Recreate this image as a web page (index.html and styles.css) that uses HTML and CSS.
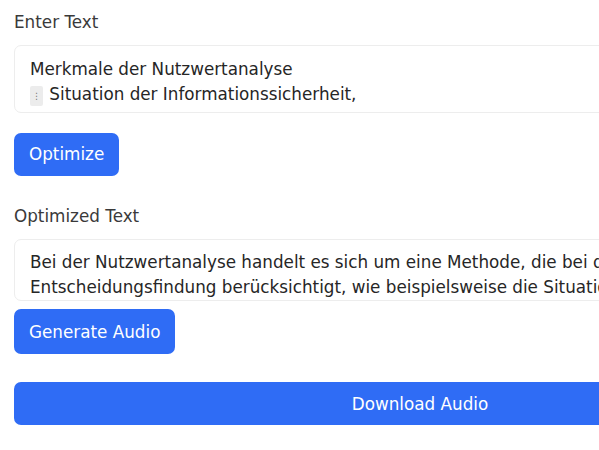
FILE: index.html
```html
<!DOCTYPE html>
<html lang="de">
<head>
<meta charset="utf-8">
<title>Text Optimizer</title>
<link rel="stylesheet" href="styles.css">
</head>
<body>
<main class="app">
  <section class="block">
    <label class="field-label">Enter Text</label>
    <div class="textbox textbox-input" role="textbox" aria-multiline="true">
      <div class="line">Merkmale der Nutzwertanalyse</div>
      <div class="line"><span class="tofu">&#8942;</span> Situation der Informationssicherheit,</div>
      <div class="line line-next"><span class="tofu">&#8942;</span> Kosten und Aufwand der Maßnahmen,</div>
    </div>
    <button class="btn btn-optimize">Optimize</button>
  </section>
  <section class="block block-second">
    <label class="field-label">Optimized Text</label>
    <div class="textbox textbox-output" role="textbox" aria-multiline="true">
      <div class="line">Bei der Nutzwertanalyse handelt es sich um eine Methode, die bei der Bewertung von Alternativen mehrere Kriterien in die</div>
      <div class="line">Entscheidungsfindung berücksichtigt, wie beispielsweise die Situation der Informationssicherheit, die Kosten und den Aufwand.</div>
    </div>
    <button class="btn btn-generate">Generate Audio</button>
  </section>
  <button class="btn btn-download">Download Audio</button>
</main>
</body>
</html>
```

FILE: styles.css
```css
html, body {
  margin: 0;
  padding: 0;
  background: #ffffff;
}

body {
  font-family: "DejaVu Sans", "Liberation Sans", sans-serif;
  font-size: 16.8px;
  color: #2b2b2b;
  overflow: hidden;
}

.app {
  width: 812px;
  padding: 13px 14px;
  display: flex;
  flex-direction: column;
  align-items: flex-start;
}

.block {
  display: flex;
  flex-direction: column;
  align-items: flex-start;
  width: 100%;
}

.block-second {
  margin-top: 31px;
}

.field-label {
  display: block;
  line-height: 19px;
  color: #3a3a3a;
  margin-bottom: 13px;
}

.textbox {
  box-sizing: border-box;
  width: 100%;
  border: 1px solid #ededed;
  border-radius: 7px;
  padding: 11px 15px;
  overflow: hidden;
  line-height: 25px;
  color: #262626;
  background: #ffffff;
}

.textbox-input {
  height: 68px;
}

.textbox-output {
  height: 62px;
  padding-top: 10px;
}

.line {
  white-space: nowrap;
  height: 25px;
}

.line-next {
  margin-top: 3px;
}

.tofu {
  display: inline-block;
  width: 13px;
  height: 20px;
  line-height: 20px;
  vertical-align: 1px;
  margin-right: 1px;
  background: #ececec;
  border-radius: 2px;
  color: #777777;
  font-size: 9px;
  text-align: center;
}

.btn {
  font-family: "DejaVu Sans", "Liberation Sans", sans-serif;
  font-size: 16.8px;
  line-height: 20px;
  padding: 12px 15px;
  border: none;
  border-radius: 7px;
  background: #2f6cf5;
  color: #ffffff;
  cursor: pointer;
}

.btn-optimize {
  margin-top: 20px;
  height: 43px;
  padding-top: 11px;
  padding-bottom: 12px;
}

.btn-generate {
  margin-top: 8px;
  height: 45px;
}

.btn-download {
  margin-top: 28px;
  width: 100%;
  height: 43px;
}
```
